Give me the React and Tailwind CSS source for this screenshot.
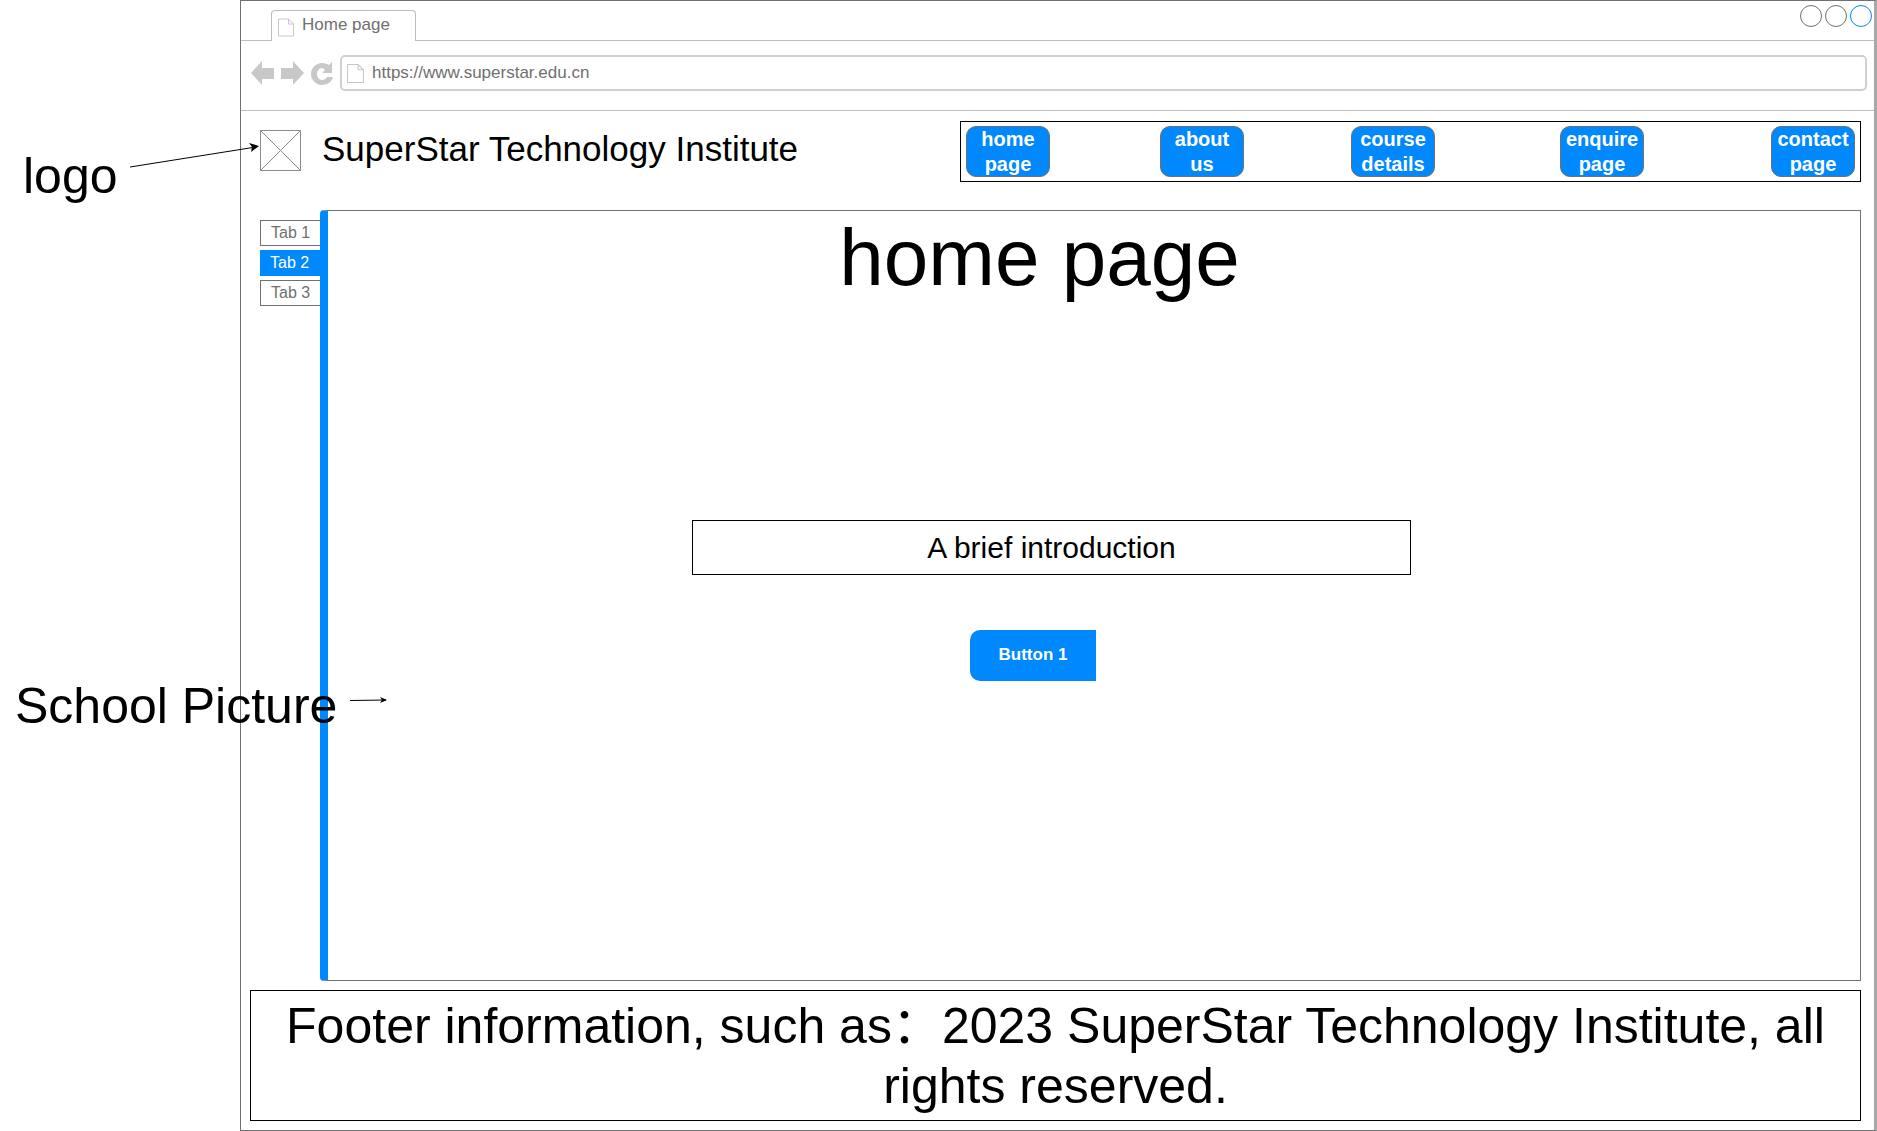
const navItems = [
  { lines: ['home', 'page'], gap: 'ml-0' },
  { lines: ['about', 'us'], gap: 'ml-[110px]' },
  { lines: ['course', 'details'], gap: 'ml-[107px]' },
  { lines: ['enquire', 'page'], gap: 'ml-[125px]' },
  { lines: ['contact', 'page'], gap: 'ml-[127px]' },
];

function PageIcon({ className }) {
  return (
    <svg viewBox="0 0 16 18" className={className} fill="none" stroke="#c8c8c8" strokeWidth="1">
      <path d="M.5.5h10l5 5v12H.5zM10.5.5v5h5" />
    </svg>
  );
}

function SideTab({ label, active }) {
  if (active) {
    return (
      <div className="h-[26px] bg-[#0088ff] text-white text-[16px] leading-[26px] pl-[10px]">{label}</div>
    );
  }
  return (
    <div className="h-[26px] border border-r-0 border-[#707070] text-[#707070] text-[16px] leading-[23px] pl-[10px]">
      {label}
    </div>
  );
}

export default function App() {
  return (
    <div className="relative w-[1877px] h-[1131px] bg-white overflow-hidden font-['Liberation_Sans','Noto_Sans_CJK_SC',Arial,sans-serif]">
      <div className="ml-[240px] w-[1637px] h-[1131px] border border-[#707070] border-r-[3px] border-r-[#a8a8a8] flex flex-col">
        {/* tab strip */}
        <div className="relative h-[40px] shrink-0 border-b border-[#bdbdbd] pl-[30px] pt-[9px]">
          <div className="w-[145px] h-[31px] -mb-px bg-white border border-b-0 border-[#bdbdbd] rounded-t-[4px] flex items-center pl-[6px] gap-[8px]">
            <PageIcon className="w-[16px] h-[19px] mt-[3px]" />
            <span className="text-[17px] leading-[20px] text-[#707070] -mt-[2px]">Home page</span>
          </div>
          <div className="absolute right-[2px] top-[4px] flex gap-[3px]">
            <div className="w-[22px] h-[22px] rounded-full border border-[#707070]" />
            <div className="w-[22px] h-[22px] rounded-full border border-[#707070]" />
            <div className="w-[22px] h-[22px] rounded-full border border-[#0088ff]" />
          </div>
        </div>

        {/* address bar */}
        <div className="h-[70px] shrink-0 border-b border-[#bdbdbd] flex items-center pl-[10px] pr-[7px] pb-[5px]">
          <svg viewBox="0 0 84 26" className="w-[84px] h-[26px] shrink-0" fill="#c8c8c8">
            <path d="M0 13 11 1v7h12v11H11v6z" />
            <path d="M53 13 42 1v7H30v11h12v6z" />
            <path fillRule="evenodd" d="M71 3c3 0 5 1 7 2l3-3v11h-10l3-3c-1-1-2-2-3-2-3 0-5 3-5 6s2 6 5 6c2 0 4-1 5-3h6c-1 5-6 8-11 8-6 0-11-5-11-11S65 3 71 3z" />
          </svg>
          <div className="ml-[5px] flex-1 h-[36px] border-2 border-[#d0d0d0] rounded-[5px] flex items-center pl-[5px] gap-[8px]">
            <PageIcon className="w-[17px] h-[19px]" />
            <span className="text-[17px] text-[#707070]">https://www.superstar.edu.cn</span>
          </div>
        </div>

        {/* header */}
        <div className="h-[99px] shrink-0 flex items-start pl-[19px] pr-[13px] pt-[10px]">
          <svg viewBox="0 0 41 41" className="w-[41px] h-[41px] mt-[9px] shrink-0" fill="none" stroke="#8c8c8c" strokeWidth="1">
            <path d="M.5.5h40v40H.5zM.5.5l40 40M40.5.5l-40 40" />
          </svg>
          <h1 className="ml-[21px] mt-[8px] text-[35px] leading-[40px] text-black font-normal whitespace-nowrap">
            SuperStar Technology Institute
          </h1>
          <nav className="ml-auto w-[901px] h-[61px] border border-black pl-[5px] pt-[4px] flex">
            {navItems.map((item) => (
              <div
                key={item.lines[0]}
                className={`${item.gap} w-[84px] h-[51px] bg-[#0088ff] border border-[#707070] rounded-[10px] text-white font-bold text-[20px] leading-[25px] text-center overflow-hidden`}
              >
                {item.lines[0]}
                <br />
                {item.lines[1]}
              </div>
            ))}
          </nav>
        </div>

        {/* tabs and main panel */}
        <div className="h-[771px] shrink-0 flex pl-[19px] pr-[13px]">
          <div className="w-[60px] shrink-0 pt-[10px] flex flex-col gap-[4px]">
            <SideTab label="Tab 1" />
            <SideTab label="Tab 2" active />
            <SideTab label="Tab 3" />
          </div>
          <main className="flex-1 border border-l-[8px] border-[#707070] border-l-[#0088ff] rounded-l-[4px] flex flex-col items-center">
            <h2 className="mr-[109px] mt-[1px] text-[80px] leading-[92px] text-black font-normal">home page</h2>
            <div className="mt-[216px] mr-[85px] w-[719px] h-[55px] border border-black flex items-center justify-center text-[30px] text-black">
              A brief introduction
            </div>
            <button className="mt-[55px] mr-[122px] w-[126px] h-[51px] pb-[2px] bg-[#0088ff] text-white font-bold text-[17px] rounded-l-[10px]">
              Button 1
            </button>
          </main>
        </div>

        {/* footer */}
        <footer className="mt-[9px] ml-[9px] mr-[13px] h-[131px] shrink-0 border border-black text-center text-[50px] leading-[60px] text-black pt-[5px] px-[8px]">
          Footer information, such as：2023 SuperStar Technology Institute, all rights reserved.
        </footer>
      </div>

      {/* annotations */}
      <div className="absolute left-[23px] top-[148px] text-[50px] leading-[56px] text-black">logo</div>
      <svg viewBox="0 0 135 30" className="absolute left-[128px] top-[142px] w-[135px] h-[30px]" fill="none">
        <path d="M2 25 128 5" stroke="#000" strokeWidth="1" />
        <path d="m131 4-10-3 3 4-1 5z" fill="#000" />
      </svg>
      <div className="absolute left-[15px] top-[678px] text-[50px] leading-[56px] text-black whitespace-nowrap">School Picture</div>
      <svg viewBox="0 0 40 10" className="absolute left-[350px] top-[695px] w-[40px] h-[10px]" fill="none">
        <path d="M0 5.5 36 5" stroke="#000" strokeWidth="1" />
        <path d="m37 5-7-3 2 3-2 3z" fill="#000" />
      </svg>
    </div>
  );
}
